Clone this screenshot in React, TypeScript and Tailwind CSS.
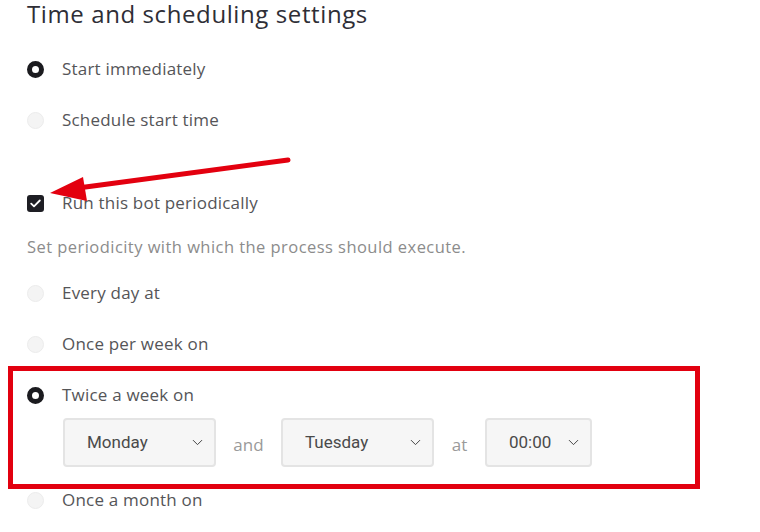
import React from "react";
import { ChevronDown } from "lucide-react";

const Radio = ({ checked }: { checked?: boolean }) =>
  checked ? (
    <span className="block w-[17px] h-[17px] rounded-full border-[5px] border-[#1b1b1f] bg-white" />
  ) : (
    <span className="block w-[17px] h-[17px] rounded-full border border-[#ececec] bg-[#f4f4f4]" />
  );

const Option = ({ label, checked, className = "" }: { label: string; checked?: boolean; className?: string }) => (
  <div className={`flex items-center h-6 pl-[27px] ${className}`}>
    <Radio checked={checked} />
    <span className="ml-[18px] text-[17px] tracking-[0.2px] text-[#555558]">{label}</span>
  </div>
);

const FakeSelect = ({ value, width }: { value: string; width: string }) => (
  <div
    className={`${width} h-[49px] flex items-center justify-between pl-[22px] pr-[8px] rounded-[4px] border-2 border-[#e4e4e4] bg-[#f6f6f6]`}
    style={{ fontFamily: "Roboto, 'Liberation Sans', sans-serif" }}
  >
    <span className="text-[17px] text-[#4a4a4a]">{value}</span>
    <ChevronDown size={17} strokeWidth={1.4} className="text-[#444]" />
  </div>
);

export default function App() {
  return (
    <div
      className="relative w-[760px] h-[532px] overflow-hidden bg-white"
      style={{ fontFamily: "'Open Sans', 'Noto Sans', sans-serif" }}
    >
      <h1 className="h-[28px] pl-[27px] text-[24px] leading-[28px] tracking-[0.6px] text-[#2e2e36]">
        Time and scheduling settings
      </h1>

      <Option label="Start immediately" checked className="mt-[29px]" />
      <Option label="Schedule start time" className="mt-[27px]" />

      <div className="flex items-center h-6 pl-[27px] mt-[59px]">
        <span className="flex items-center justify-center w-[17px] h-[17px] rounded-[3px] bg-[#1e1e24]">
          <svg width="11" height="9" viewBox="0 0 11 9" fill="none">
            <path d="M1.2 4.6 L4 7.3 L9.8 1.5" stroke="white" strokeWidth="1.8" strokeLinecap="round" strokeLinejoin="round" />
          </svg>
        </span>
        <span className="ml-[18px] text-[17px] tracking-[0.2px] text-[#555558]">Run this bot periodically</span>
      </div>

      <p className="h-6 leading-6 mt-[20px] pl-[27px] text-[16.5px] tracking-[0.45px] text-[#8c8c8c]">
        Set periodicity with which the process should execute.
      </p>

      <Option label="Every day at" className="mt-[22px]" />
      <Option label="Once per week on" className="mt-[27px]" />
      <Option label="Twice a week on" checked className="mt-[27px]" />

      <div className="flex items-center mt-[11px] pl-[63px]">
        <FakeSelect value="Monday" width="w-[153px]" />
        <span className="w-[65px] text-center pt-[5px] text-[17px] text-[#9a9a9a]">and</span>
        <FakeSelect value="Tuesday" width="w-[153px]" />
        <span className="w-[51px] text-center pt-[5px] text-[17px] text-[#9a9a9a]">at</span>
        <FakeSelect value="00:00" width="w-[107px]" />
      </div>

      <Option label="Once a month on" className="mt-[21px]" />

      {/* annotation: red box */}
      <div className="absolute left-[8px] top-[366px] w-[692px] h-[123px] border-[5px] border-[#e2000f]" />

      {/* annotation: arrow */}
      <svg className="absolute left-0 top-0" width="760" height="532" viewBox="0 0 760 532">
        <line x1="288" y1="160" x2="78" y2="188" stroke="#e3000f" strokeWidth="5" strokeLinecap="round" />
        <polygon points="50,193 83,177 87,201" fill="#e3000f" />
      </svg>
    </div>
  );
}
